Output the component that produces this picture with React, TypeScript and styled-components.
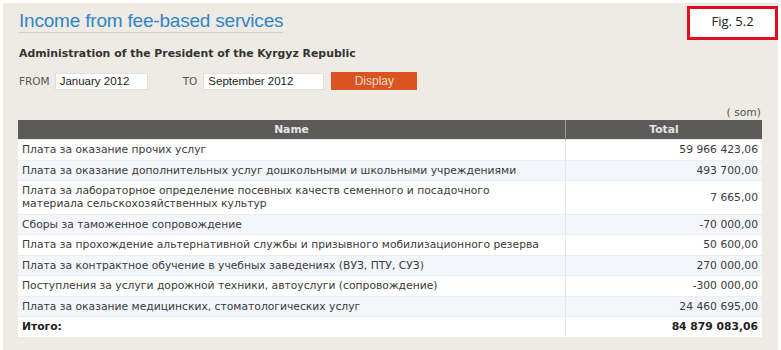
import React from "react";
import styled, { createGlobalStyle } from "styled-components";

const Global = createGlobalStyle`
  html, body { margin: 0; padding: 0; background: #ffffff; }
  body { font-family: "DejaVu Sans", Verdana, sans-serif; }
`;

const Panel = styled.div`
  position: relative;
  margin: 3px 3px 0 3px;
  height: 347px;
  background: #eeebe5;
  padding: 8px 16px 0 15px;
  box-sizing: border-box;
`;

const Title = styled.h1`
  display: inline-block;
  margin: 0 0 0 1px;
  font-family: "Liberation Sans", Arial, sans-serif;
  font-weight: normal;
  font-size: 19px;
  letter-spacing: -0.2px;
  line-height: 20px;
  color: #2f85c6;
  padding-bottom: 1px;
  border-bottom: 1px solid #c9d3dc;
`;

const FigBox = styled.div`
  position: absolute;
  top: 3px;
  right: 0px;
  width: 81px;
  border: 3px solid #e0101e;
  background: #ffffff;
  font-family: "Open Sans", "Liberation Sans", sans-serif;
  font-size: 13px;
  color: #222;
  display: flex;
  justify-content: center;
  padding: 3px 2px 0;
  box-sizing: content-box;
  height: 25px;
`;

const Subtitle = styled.div`
  margin: 14px 0 0 1px;
  font-weight: bold;
  font-size: 10.9px;
  color: #333;
  line-height: 14px;
`;

const FormRow = styled.div`
  display: flex;
  align-items: center;
  margin: 11px 0 0 1px;
  height: 18px;
`;

const Label = styled.span<{ gap: number; lead?: number }>`
  font-size: 10.5px;
  color: #555;
  margin-left: ${(p) => p.lead ?? 0}px;
  margin-right: ${(p) => p.gap}px;
`;

const Field = styled.div<{ w: number }>`
  width: ${(p) => p.w}px;
  height: 17px;
  background: #fff;
  border: 1px solid #e2dfd8;
  box-sizing: border-box;
  font-family: "Liberation Sans", Arial, sans-serif;
  font-size: 11.5px;
  color: #222;
  line-height: 15px;
  padding-left: 4px;
`;

const Button = styled.div`
  width: 86px;
  height: 18px;
  margin-left: 7px;
  background: #d95420;
  color: #f6d8c8;
  font-family: "Liberation Sans", Arial, sans-serif;
  font-size: 12px;
  display: flex;
  align-items: center;
  justify-content: center;
`;

const Unit = styled.div`
  margin-top: 17px;
  text-align: right;
  font-size: 10.75px;
  color: #555;
  line-height: 12px;
  padding-right: 1px;
`;

const Table = styled.table`
  width: 744px;
  margin-top: 1px;
  border-collapse: collapse;
  font-size: 10.75px;
  color: #333;
`;

const Th = styled.th`
  background: #5b5b59;
  color: #e6e6e6;
  font-weight: bold;
  font-size: 10.75px;
  height: 19px;
  padding: 0;
  text-align: center;
  & + & { border-left: 1px solid #9a9a98; }
`;

const Tr = styled.tr<{ alt: boolean }>`
  background: ${(p) => (p.alt ? "#f3f6fb" : "#ffffff")};
  border-top: 1px solid #e9edf2;
`;

const NameTd = styled.td<{ bold?: boolean }>`
  padding: 3.25px 4px;
  line-height: 13px;
  font-weight: ${(p) => (p.bold ? "bold" : "normal")};
  color: ${(p) => (p.bold ? "#222" : "#3a3a3a")};
  width: 539px;
`;

const NumTd = styled.td<{ bold?: boolean }>`
  padding: 3.25px 4px;
  text-align: right;
  line-height: 13px;
  font-weight: ${(p) => (p.bold ? "bold" : "normal")};
  color: ${(p) => (p.bold ? "#222" : "#3a3a3a")};
  border-left: 1px solid #e4e8ee;
  white-space: nowrap;
`;

const rows: [string[], string][] = [
  [["Плата за оказание прочих услуг"], "59 966 423,06"],
  [["Плата за оказание дополнительных услуг дошкольными и школьными учреждениями"], "493 700,00"],
  [["Плата за лабораторное определение посевных качеств семенного и посадочного", "материала сельскохозяйственных культур"], "7 665,00"],
  [["Сборы за таможенное сопровождение"], "-70 000,00"],
  [["Плата за прохождение альтернативной службы и призывного мобилизационного резерва"], "50 600,00"],
  [["Плата за контрактное обучение в учебных заведениях (ВУЗ, ПТУ, СУЗ)"], "270 000,00"],
  [["Поступления за услуги дорожной техники, автоуслуги (сопровождение)"], "-300 000,00"],
  [["Плата за оказание медицинских, стоматологических услуг"], "24 460 695,00"],
];

export default function App() {
  return (
    <>
      <Global />
      <Panel>
        <Title>Income from fee-based services</Title>
        <FigBox>Fig. 5.2</FigBox>
        <Subtitle>Administration of the President of the Kyrgyz Republic</Subtitle>
        <FormRow>
          <Label gap={5}>FROM</Label>
          <Field w={93}>January 2012</Field>
          <Label gap={6} lead={35}>TO</Label>
          <Field w={121}>September 2012</Field>
          <Button>Display</Button>
        </FormRow>
        <Unit>( som)</Unit>
        <Table>
          <thead>
            <tr>
              <Th>Name</Th>
              <Th>Total</Th>
            </tr>
          </thead>
          <tbody>
            {rows.map(([lines, v], i) => (
              <Tr key={i} alt={i % 2 === 1}>
                <NameTd>
                  {lines.map((l, j) => (
                    <React.Fragment key={j}>
                      {j > 0 && <br />}
                      {l}
                    </React.Fragment>
                  ))}
                </NameTd>
                <NumTd>{v}</NumTd>
              </Tr>
            ))}
            <Tr alt={false}>
              <NameTd bold>Итого:</NameTd>
              <NumTd bold>84 879 083,06</NumTd>
            </Tr>
          </tbody>
        </Table>
      </Panel>
    </>
  );
}
